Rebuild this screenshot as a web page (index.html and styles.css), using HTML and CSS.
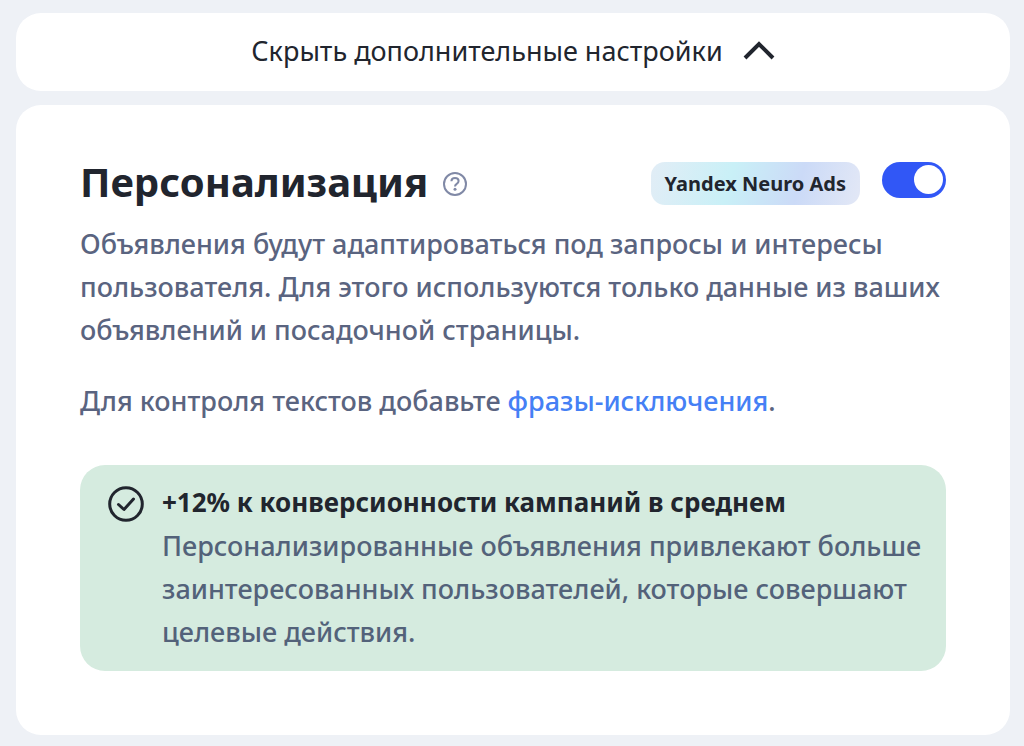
FILE: index.html
```html
<!DOCTYPE html>
<html lang="ru">
  <head>
    <meta charset="utf-8" />
    <title>Персонализация</title>
    <meta name="viewport" content="width=device-width, initial-scale=1" />
    <link rel="stylesheet" href="styles.css">
  </head>
  <body>
    <button class="collapse" type="button" aria-expanded="true">
      Скрыть дополнительные настройки
      <svg class="chevron" viewBox="0 0 32 20" aria-hidden="true">
        <path d="M2 17L16 3l14 14" />
      </svg>
    </button>

    <main class="card">
      <div class="card-header">
        <h1 id="card-title">Персонализация</h1>
        <button class="help" type="button" aria-label="Справка">
          <svg viewBox="0 0 24 24" aria-hidden="true">
            <circle cx="12" cy="12" r="11" />
            <path d="M8.4 9.2C8.5 7.2 10 6.1 12 6.1s3.600 1.200 3.600 3c0 1.400-.8 2.100-1.900 2.800-1.200.8-1.700 1.200-1.700 2.700" />
            <circle class="dot" cx="12" cy="17.300" r="1.500" />
          </svg>
        </button>
        <span class="badge">Yandex Neuro Ads</span>
        <input class="toggle" type="checkbox" role="switch" aria-labelledby="card-title" checked />
      </div>

      <p>
        Объявления будут адаптироваться под запросы и интересы пользователя.
        Для этого используются только данные из ваших объявлений и посадочной
        страницы.
      </p>
      <p>Для контроля текстов добавьте <a href="#">фразы-исключения</a>.</p>

      <section class="notice">
        <svg class="check" viewBox="0 0 36 36" aria-hidden="true">
          <circle cx="18" cy="18" r="16.300" />
          <path d="M10.500 18.500l5.500 5L25.500 13" />
        </svg>
        <div class="notice-text">
          <h2>+12% к конверсионности кампаний в среднем</h2>
          <p>
            Персонализированные объявления привлекают больше заинтересованных
            пользователей, которые совершают целевые действия.
          </p>
        </div>
      </section>
    </main>
  </body>
</html>
```
FILE: styles.css
```css
* {
  box-sizing: border-box;
}
body {
  display: flex;
  flex-direction: column;
  gap: 14px;
  margin: 0;
  padding: 13px 14px 11px 16px;
  background: #eef1f6;
  color: #21252e;
  font-family: 'Noto Sans', sans-serif;
  font-size: 27px;
  line-height: 43px;
}
h1,
h2,
p {
  margin: 0;
}
button {
  padding: 0;
  border: 0;
  color: inherit;
  font: inherit;
  cursor: pointer;
}
svg {
  display: block;
  fill: none;
  stroke: currentColor;
}
.collapse {
  display: flex;
  justify-content: center;
  align-items: center;
  gap: 20px;
  padding: 16px 24px 19px;
  border-radius: 25px;
  background: #fff;
}
.chevron {
  width: 32px;
  height: 20px;
  stroke-width: 4;
}
.card {
  display: flex;
  flex-direction: column;
  gap: 28px;
  padding: 57px 64px 64px;
  border-radius: 25px;
  background: #fff;
  color: #5a6480;
  font-weight: 500;
}
.card-header {
  display: flex;
  align-items: flex-start;
  margin-bottom: -11px;
}
h1 {
  color: #21252e;
  font-size: 40px;
  font-weight: 700;
  line-height: 40px;
}
.help {
  width: 24px;
  height: 24px;
  margin-top: 10px;
  margin-left: 15px;
  background: none;
  color: #8089a6;
}
.help svg {
  stroke-width: 2;
}
.help .dot {
  fill: currentColor;
  stroke: none;
}
.badge {
  margin-left: auto;
  padding: 0 14px;
  border-radius: 14px;
  background: linear-gradient(
    105deg,
    #e2edf6 0%,
    #c9f0f7 38%,
    #cbdaf7 70%,
    #e3e8f6 100%
  );
  color: #21252e;
  font-size: 20px;
  font-weight: 700;
}
.toggle {
  display: flex;
  justify-content: flex-end;
  width: 64px;
  height: 36px;
  margin: 0 0 0 22px;
  padding: 3px;
  border-radius: 18px;
  background: #3157f6;
  appearance: none;
  cursor: pointer;
}
.toggle::before {
  content: '';
  width: 29px;
  height: 29px;
  border-radius: 50%;
  background: #fff;
}
.toggle:not(:checked) {
  justify-content: flex-start;
  background: #c4c9d6;
}
a {
  color: #4580f5;
  text-decoration: none;
}
.notice {
  display: flex;
  align-items: flex-start;
  gap: 18px;
  margin-top: 15px;
  padding: 16px 18px 18px 28px;
  border-radius: 25px;
  background: #d5ebdf;
  color: #53627a;
}
.check {
  flex: none;
  width: 36px;
  height: 36px;
  margin-top: 5px;
  color: #21252e;
  stroke-width: 3;
  stroke-linecap: round;
  stroke-linejoin: round;
}
h2 {
  color: #21252e;
  font-size: 26px;
  font-weight: 700;
}
```
